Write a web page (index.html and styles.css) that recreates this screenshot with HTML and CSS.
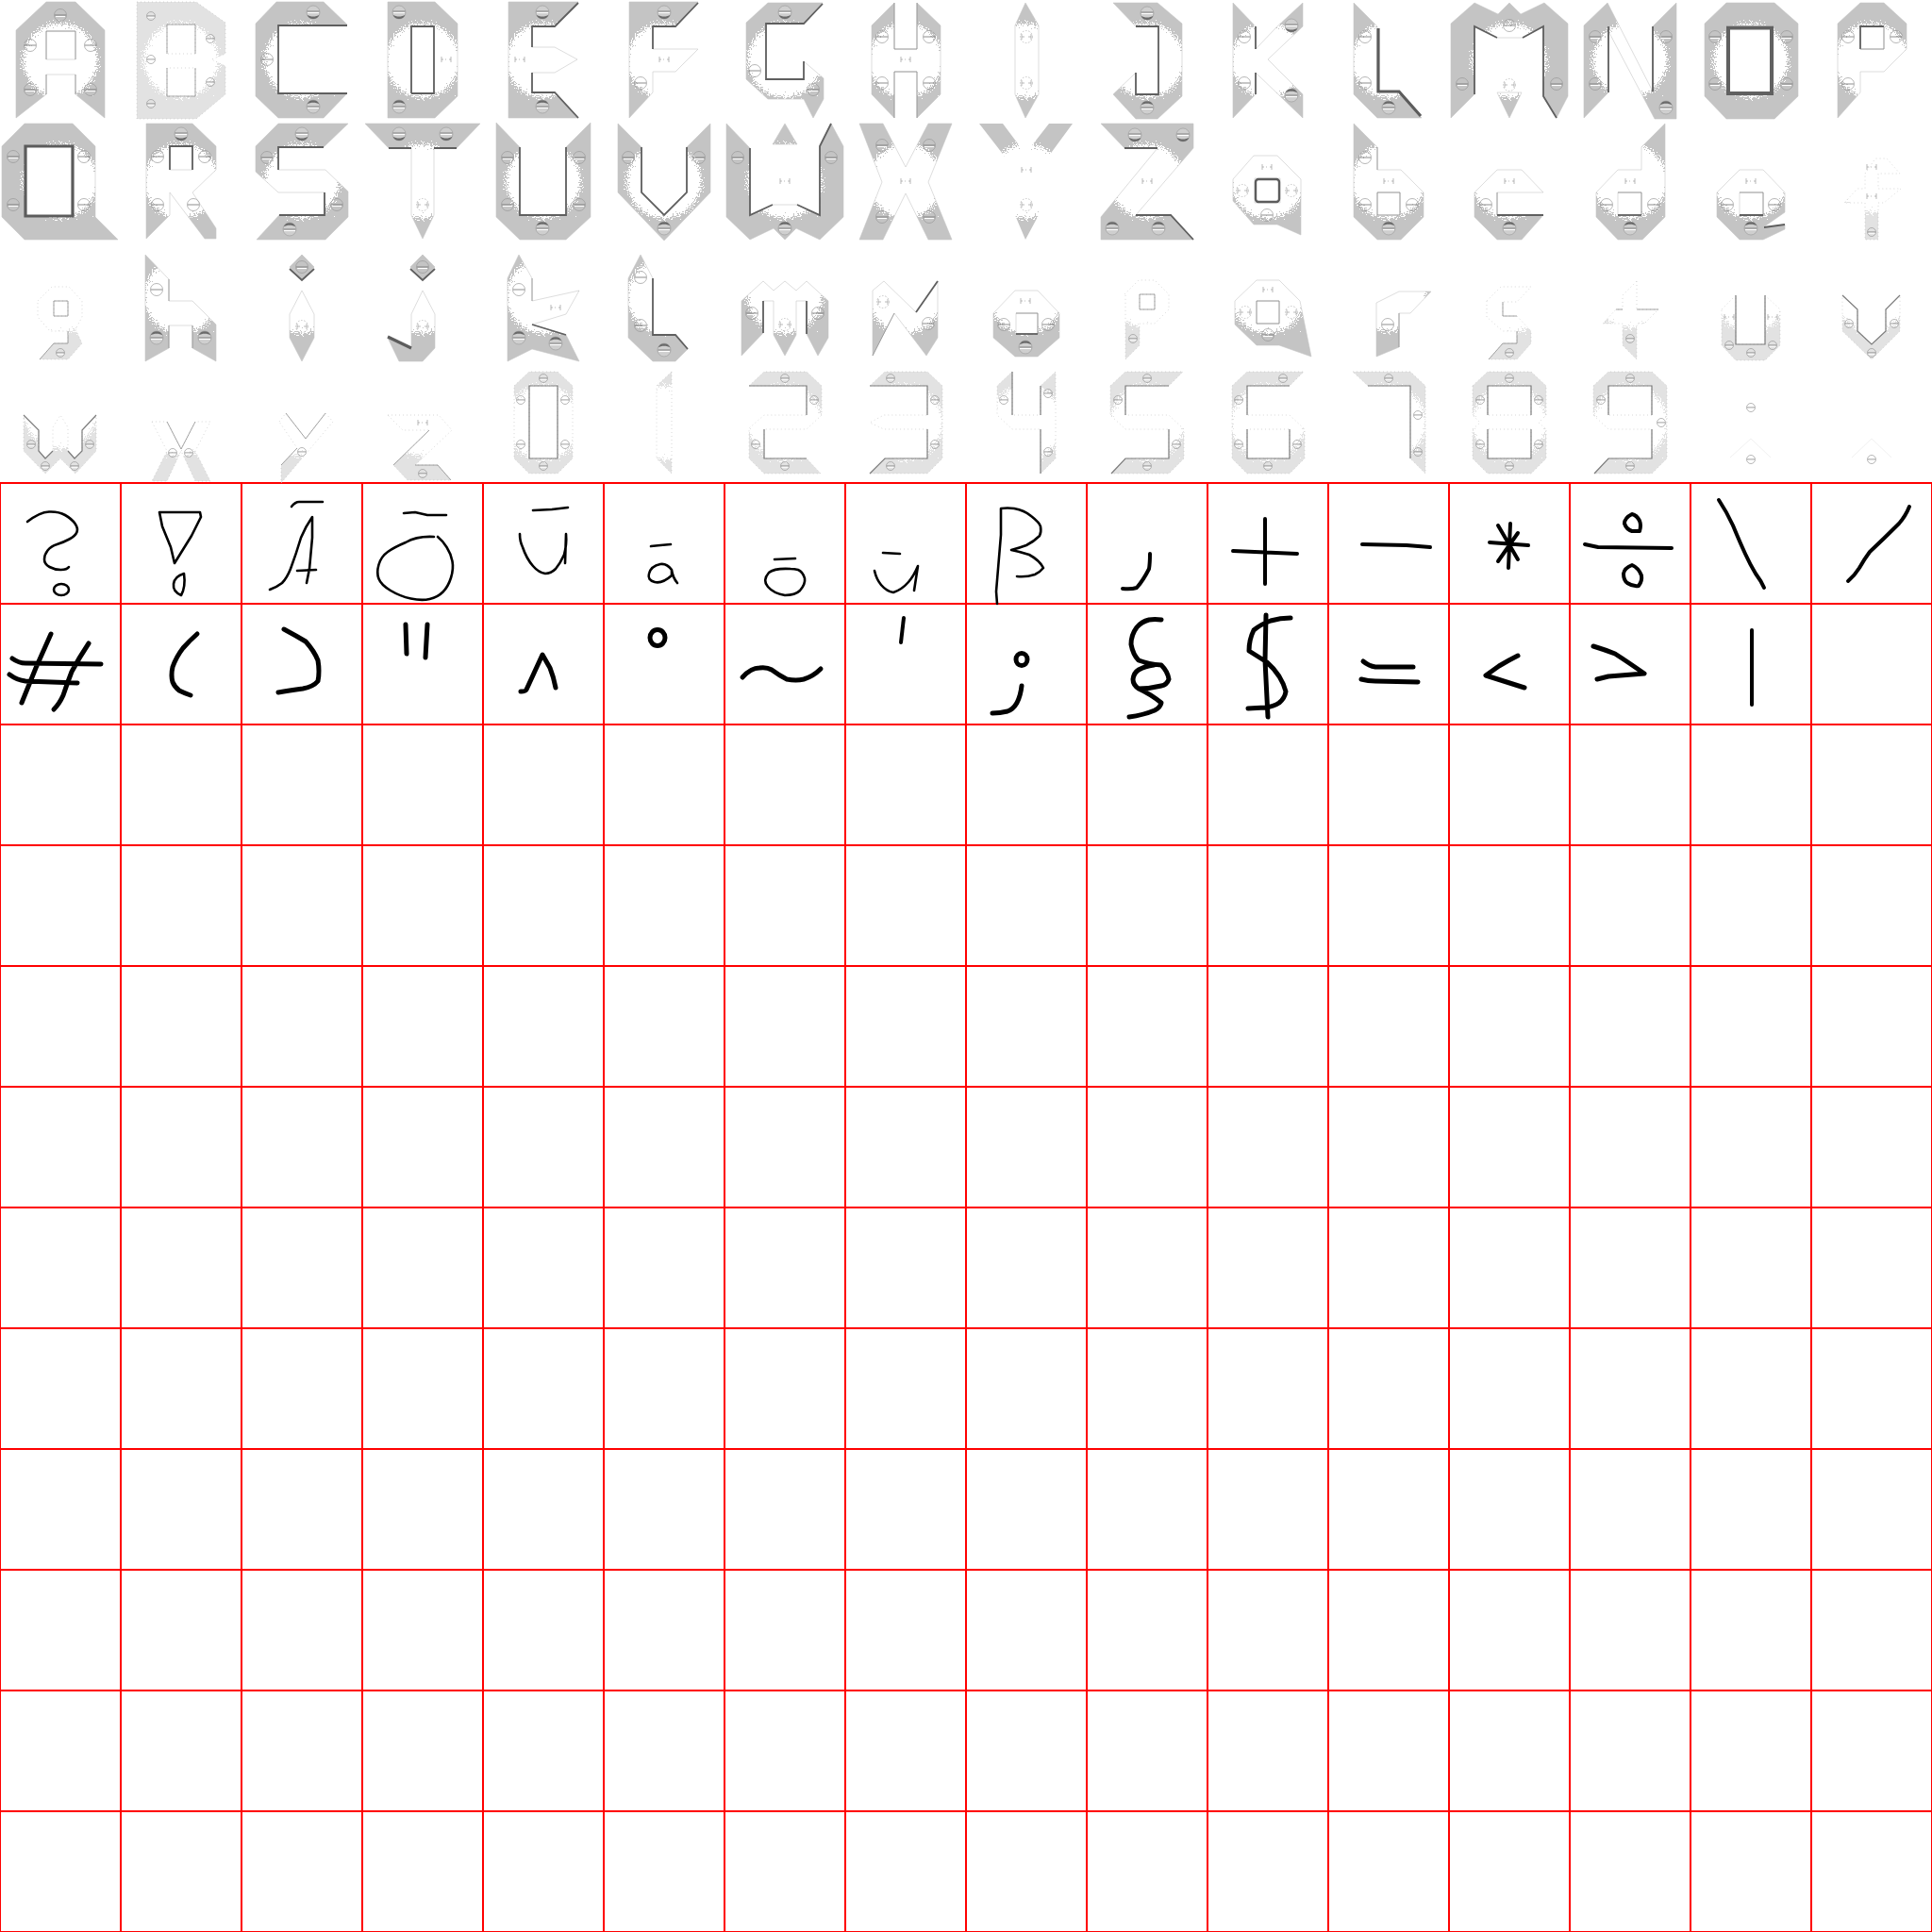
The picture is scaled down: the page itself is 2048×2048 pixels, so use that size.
FILE: index.html
```html
<!DOCTYPE html>
<html lang="en">
<head>
<meta charset="utf-8">
<title>Font sheet</title>
<link rel="stylesheet" href="styles.css">
</head>
<body>
<svg class="defs" aria-hidden="true">
  <defs>
    <radialGradient id="fade" cx="64" cy="64" r="45" gradientUnits="userSpaceOnUse">
      <stop offset="0.74" stop-color="#fff" stop-opacity="1"/>
      <stop offset="1" stop-color="#fff" stop-opacity="0"/>
    </radialGradient>
    <filter id="grain" x="0" y="0" width="1" height="1" color-interpolation-filters="sRGB">
      <feTurbulence type="fractalNoise" baseFrequency="0.75" numOctaves="2" seed="7" result="noise"/>
      <feColorMatrix in="noise" type="matrix" values="0 0 0 0 1  0 0 0 0 1  0 0 0 0 1  0 0 0 1.5 -0.25" result="spread"/>
      <feComposite in="SourceGraphic" in2="spread" operator="arithmetic" k1="0" k2="1" k3="1" k4="-0.5" result="mix"/>
      <feComponentTransfer in="mix" result="hard">
        <feFuncA type="discrete" tableValues="0 1"/>
      </feComponentTransfer>
      <feFlood flood-color="#fff"/>
      <feComposite in2="hard" operator="in"/>
    </filter>
    <circle id="spot" cx="64" cy="64" r="45" fill="url(#fade)" filter="url(#grain)"/>
    <g id="sb"><circle r="7" class="sc-face"/><path class="sc-shade" d="M-6.4-2.500A6.900 6.900 0 0 1 6.400-2.500C3-5-3-5-6.400-2.500Z"/><path class="sc-slot" d="M-6.500 0H6.500"/><path class="sc-glint" d="M-6 1.500H6"/></g>
    <g id="st"><circle r="7" class="sc-face"/><path class="sc-shade" d="M-6.400 2.800A6.900 6.900 0 0 0 6.400 2.800C3 5.200-3 5.200-6.400 2.800Z"/><path class="sc-slot" d="M-6.500-1H6.500"/><path class="sc-glint" d="M-6 .5H6"/></g>
    <g id="sm"><circle r="6.500" class="sc-ring"/><path class="sc-slot" d="M-6 0H6"/><path class="sc-glint" d="M-5 1.500H5"/></g>
    <g id="sl"><circle r="4.500" class="sc-ring"/><path class="sc-slot" d="M-4 0H4"/><path class="sc-glint" d="M-3.500 1.200H3.500"/></g>
    <g id="sd"><circle r="6.500" class="sc-dash"/><path class="sc-mark" d="M-5-3V3M5-3V3M-5 0H-2M2 0H5"/></g>
    <g id="sf"><path class="sc-mark" d="M-5-3V3M5-3V3M-5 0H-3M-1 0H0M3 0H5"/></g>
  </defs>
</svg>

<main class="sheet">
  <section class="plates">
    <!-- A -->
    <svg class="glyph grey"><path id="p-A" d="M17 32 49 2H80L111 32V125L80 100V79H49V100L17 125ZM49 33H80V63H49Z"/><use href="#spot"/><use class="rim" href="#p-A"/><path class="et" d="M49 33H80M49 33V63M80 33V63M49 79V100M80 79V100"/><use href="#sm" x="64" y="16"/><use href="#sm" x="32" y="48"/><use href="#sm" x="96" y="48"/><use href="#sm" x="32" y="95"/><use href="#sm" x="96" y="95"/></svg>
    <!-- B -->
    <svg class="glyph pale"><path id="p-B" d="M17 2H80L111 24V57L96 63 111 70V100L80 126H17ZM49 26V57H79V26ZM49 72V102H79V72Z"/><use href="#spot"/><use class="rim" href="#p-B"/><path class="et" d="M49 57V26H79V57M49 72V102H79V72"/><use href="#sl" x="32" y="17"/><use href="#sl" x="95" y="41"/><use href="#sl" x="32" y="63"/><use href="#sl" x="95" y="87"/><use href="#sl" x="32" y="110"/></svg>
    <!-- C -->
    <svg class="glyph grey"><path id="p-C" d="M15 25 37 2H87L112 26H39V99H112L87 125H39L15 102Z"/><use href="#spot"/><use class="rim" href="#p-C"/><path class="ed" d="M112 27H39V99H112"/><use href="#st" x="76" y="13"/><use href="#sm" x="27" y="63"/><use href="#sb" x="76" y="113"/></svg>
    <!-- D -->
    <svg class="glyph grey"><path id="p-D" d="M27 2H77L101 25V102L77 125H27ZM52 28V99H76V28Z"/><use href="#spot"/><use class="rim" href="#p-D"/><path class="ed" d="M52 99V28H76V99H52"/><use href="#st" x="39" y="13"/><use href="#sf" x="89" y="63"/><use href="#sb" x="39" y="113"/></svg>
    <!-- E -->
    <svg class="glyph grey"><path id="p-E" d="M27 2H101L76 28H52V50H76L100 63 76 77H52V98H76L101 125H27Z"/><use href="#spot"/><use class="rim" href="#p-E"/><path class="ed" d="M101 3 76 28H52V50M52 77V98H76L101 125"/><use href="#st" x="63" y="13"/><use href="#sf" x="39" y="63"/><use href="#sb" x="63" y="113"/></svg>
    <!-- F -->
    <svg class="glyph grey"><path id="p-F" d="M27 2H100L76 28H52V52H100L76 76H52V98L27 125Z"/><use href="#spot"/><use class="rim" href="#p-F"/><path class="ed" d="M100 3 76 28H52V52"/><use href="#st" x="64" y="13"/><use href="#sf" x="64" y="63"/><use href="#sm" x="39" y="88"/></svg>
    <!-- G -->
    <svg class="glyph grey"><path id="p-G" d="M23 24 46 3H104L84 25H44V84H84V65L105 83V105L94 125 84 105H46L23 84Z"/><use href="#spot"/><use class="rim" href="#p-G"/><path class="ed" d="M104 4 84 25H44V84H84V65"/><use href="#st" x="64" y="13"/><use href="#sm" x="32" y="75"/><use href="#sm" x="94" y="95"/></svg>
    <!-- H -->
    <svg class="glyph grey"><path id="p-H" d="M52 3V52H76V3L101 27V100L76 125V76H52V125L28 100V27Z"/><use href="#spot"/><use class="rim" href="#p-H"/><path class="et" d="M52 3V52H76V3M52 125V76H76V125"/><use href="#sm" x="39" y="39"/><use href="#sm" x="89" y="39"/><use href="#sf" x="64" y="63"/><use href="#sm" x="39" y="88"/><use href="#sm" x="89" y="88"/></svg>
    <!-- I -->
    <svg class="glyph grey"><path id="p-I" d="M63 3 77 27V100L63 125 52 100V27Z"/><use href="#spot"/><use class="rim" href="#p-I"/><use href="#sd" x="64" y="39"/><use href="#sd" x="64" y="88"/></svg>
    <!-- J -->
    <svg class="glyph grey"><path id="p-J" d="M28 3H75L101 25V102L75 126H52L28 100 52 77V100H76V28H52Z"/><use href="#spot"/><use class="rim" href="#p-J"/><path class="ed" d="M52 28H76V100H52V77"/><use href="#st" x="64" y="14"/><use href="#sb" x="64" y="114"/></svg>
    <!-- K -->
    <svg class="glyph grey"><path id="p-K" d="M27 3 51 28V52L74 28 101 3V28L64 63 101 100V125L51 77V100L27 125Z"/><use href="#spot"/><use class="rim" href="#p-K"/><path class="ed" d="M51 28V52M51 77V100"/><use href="#sm" x="39" y="39"/><use href="#sm" x="39" y="88"/><use href="#st" x="89" y="27"/><use href="#sb" x="89" y="101"/></svg>
    <!-- L -->
    <svg class="glyph grey"><path id="p-L" d="M27 3 52 28V98H75L99 125H52L27 100Z"/><use href="#spot"/><use class="rim" href="#p-L"/><path class="eh" d="M53 30V97H75L98 123"/><use href="#sm" x="39" y="39"/><use href="#sm" x="39" y="88"/><use href="#sb" x="64" y="114"/></svg>
    <!-- M -->
    <svg class="glyph grey"><path id="p-M" d="M2 25 27 3 52 15 64 3 76 15 101 3 126 25V102L114 125 100 102V28L78 40H51L27 28V100L2 125ZM51 98H77L64 125Z"/><use href="#spot"/><use class="rim" href="#p-M"/><path class="ed" d="M51 40 27 28V100M78 40 100 28V102L114 125"/><use href="#sm" x="64" y="27"/><use href="#sm" x="14" y="89"/><use href="#sm" x="114" y="89"/><use href="#sd" x="64" y="90"/></svg>
    <!-- N -->
    <svg class="glyph grey"><path id="p-N" d="M15 27 40 3 88 97V28L113 3V126H90L41 33V98L15 125Z"/><use href="#spot"/><use class="rim" href="#p-N"/><path class="ed" d="M41 28V98M88 28V97"/><use href="#sm" x="27" y="39"/><use href="#sm" x="27" y="89"/><use href="#sm" x="102" y="39"/><use href="#sb" x="102" y="114"/></svg>
    <!-- O -->
    <svg class="glyph grey"><path id="p-O" d="M15 25 38 3H89L114 25V102L89 126H38L15 102ZM38 27V101H88V27Z"/><use href="#spot"/><use class="rim" href="#p-O"/><path class="frame" d="M40 29.500H86V99H40Z"/><use href="#sm" x="26" y="39"/><use href="#sm" x="26" y="89"/><use href="#sm" x="102" y="39"/><use href="#sm" x="102" y="89"/></svg>
    <!-- P -->
    <svg class="glyph grey"><path id="p-P" d="M28 25 52 3H77L101 25V52L77 76H52V98L28 125ZM52 28V52H77V28Z"/><use href="#spot"/><use class="rim" href="#p-P"/><path class="ed" d="M52 52V28H77"/><path class="et" d="M52 52H77V28"/><use href="#sm" x="39" y="39"/><use href="#sm" x="39" y="89"/><use href="#sm" x="90" y="39"/></svg>

    <!-- Q -->
    <svg class="glyph grey"><path id="p-Q" d="M2 27 26 3H77L101 27V102L125 126H26L2 102ZM27 27V101H77V27Z"/><use href="#spot"/><use class="rim" href="#p-Q"/><path class="eh" d="M27 27H77V101H27Z"/><use href="#sm" x="14" y="38"/><use href="#sm" x="14" y="89"/><use href="#sm" x="89" y="38"/><use href="#sm" x="89" y="89"/></svg>
    <!-- R -->
    <svg class="glyph grey"><path id="p-R" d="M27 3H76L101 27V52L76 76 101 114V125H89L52 76V100L27 125ZM52 27V52H76V27Z"/><use href="#spot"/><use class="rim" href="#p-R"/><path class="ed" d="M52 52V27H76V52"/><use href="#st" x="64" y="14"/><use href="#sm" x="39" y="38"/><use href="#sm" x="89" y="38"/><use href="#sm" x="39" y="89"/><use href="#sm" x="77" y="89"/></svg>
    <!-- S -->
    <svg class="glyph grey"><path id="p-S" d="M15 27 39 3H113L87 28H39V52H89L113 75V102L89 126H16L40 100H88V76H39L15 54Z"/><use href="#spot"/><use class="rim" href="#p-S"/><path class="ed" d="M87 28H39V52M88 76V100H40"/><use href="#st" x="64" y="14"/><use href="#sm" x="27" y="39"/><use href="#sm" x="101" y="89"/><use href="#sb" x="51" y="115"/></svg>
    <!-- T -->
    <svg class="glyph grey"><path id="p-T" d="M3 3H125L100 29H76V100L64 125 52 100V29H28Z"/><use href="#spot"/><use class="rim" href="#p-T"/><path class="ed" d="M28 29H52M76 29H100"/><use href="#st" x="39" y="14"/><use href="#st" x="89" y="14"/><use href="#sd" x="64" y="89"/></svg>
    <!-- U -->
    <svg class="glyph grey"><path id="p-U" d="M14 2 39 28V100H88V28L114 2V102L88 126H39L14 102Z"/><use href="#spot"/><use class="rim" href="#p-U"/><path class="ed" d="M39 28V100H88V28"/><use href="#sm" x="26" y="39"/><use href="#sm" x="26" y="89"/><use href="#sm" x="102" y="39"/><use href="#sm" x="102" y="89"/><use href="#sb" x="63" y="114"/></svg>
    <!-- V -->
    <svg class="glyph grey"><path id="p-V" d="M15 3 40 28V76L64 100 88 76V28L113 3V76L64 127 15 76Z"/><use href="#spot"/><use class="rim" href="#p-V"/><path class="ed" d="M40 28V76L64 100 88 76V28"/><use href="#sm" x="26" y="39"/><use href="#sm" x="101" y="39"/><use href="#sb" x="64" y="114"/></svg>
    <!-- W -->
    <svg class="glyph grey"><path id="p-W" d="M2 3 27 29V100L51 89H77L101 100V27L113 3 126 27V102L101 126 76 114 64 126 52 114 27 126 2 102ZM64 3 77 25H51Z"/><use href="#spot"/><use class="rim" href="#p-W"/><path class="ed" d="M27 29V100L51 89M77 89 101 100V27L113 3"/><use href="#sm" x="14" y="39"/><use href="#sm" x="113" y="39"/><use href="#sb" x="64" y="114"/><use href="#sf" x="64" y="64"/></svg>
    <!-- X -->
    <svg class="glyph grey"><path id="p-X" d="M15 3H40L64 49 88 3H113L88 65 113 126H88L64 77 40 126H15L39 65Z"/><use href="#spot"/><use class="rim" href="#p-X"/><use href="#sm" x="39" y="26"/><use href="#sm" x="89" y="26"/><use href="#sm" x="39" y="102"/><use href="#sm" x="89" y="102"/><use href="#sf" x="64" y="64"/></svg>
    <!-- Y -->
    <svg class="glyph grey"><path id="p-Y" d="M14 3H39L63 35 88 3H113L77 52V100L63 126 52 100V52Z"/><use href="#spot"/><use href="#sf" x="64" y="52"/><use href="#sd" x="64" y="89"/></svg>
    <!-- Z -->
    <svg class="glyph grey"><path id="p-Z" d="M15 3H113V29L52 100H89L113 126H15V102L75 29H40Z"/><use href="#spot"/><use class="rim" href="#p-Z"/><path class="ed" d="M40 29H75M52 100H89L113 126"/><use href="#st" x="51" y="15"/><use href="#st" x="102" y="15"/><use href="#sb" x="27" y="114"/><use href="#sb" x="76" y="114"/><use href="#sf" x="64" y="64"/></svg>
    <!-- a -->
    <svg class="glyph grey"><path id="p-a" d="M27 62 49 37H74L99 62V121L74 110H49L27 85ZM50 61V87H77V61Z"/><use href="#spot"/><use class="rim" href="#p-a"/><rect class="hole" x="51" y="62" width="25" height="24" rx="3"/><use href="#sd" x="37" y="74"/><use href="#sd" x="89" y="74"/><use href="#sm" x="63" y="100"/><use href="#sf" x="63" y="49"/></svg>
    <!-- b -->
    <svg class="glyph grey"><path id="p-b" d="M27 3 52 28V52H77L101 76V102L77 126H52L27 102ZM52 76V100H76V76Z"/><use href="#spot"/><use class="rim" href="#p-b"/><path class="et" d="M52 28V52M52 76H76V100H52Z"/><use href="#sm" x="39" y="39"/><use href="#sm" x="39" y="89"/><use href="#sm" x="89" y="89"/><use href="#sb" x="64" y="114"/><use href="#sf" x="64" y="64"/></svg>
    <!-- c -->
    <svg class="glyph grey"><path id="p-c" d="M27 76 51 52H77L100 76H51V100H100L77 126H51L27 102Z"/><use href="#spot"/><use class="rim" href="#p-c"/><path class="et" d="M51 76V100"/><path class="ed" d="M51 100H100"/><use href="#sm" x="39" y="89"/><use href="#sb" x="64" y="114"/><use href="#sf" x="64" y="64"/></svg>
    <!-- d -->
    <svg class="glyph grey"><path id="p-d" d="M101 3V102L77 126H51L28 102V76L51 52H76V28ZM51 76V100H76V76Z"/><use href="#spot"/><use class="rim" href="#p-d"/><path class="et" d="M51 76H76V100"/><path class="ed" d="M51 100H76"/><use href="#sm" x="39" y="89"/><use href="#sm" x="89" y="89"/><use href="#sb" x="64" y="114"/><use href="#sf" x="64" y="64"/></svg>
    <!-- e -->
    <svg class="glyph grey"><path id="p-e" d="M28 76 52 52H77L100 76V97L77 113 100 110V115L77 126H52L28 102ZM52 76V100H77V76Z"/><use href="#spot"/><use class="rim" href="#p-e"/><path class="et" d="M52 76H77V100"/><path class="ed" d="M52 100H77M78 113 100 110"/><use href="#sm" x="39" y="89"/><use href="#sm" x="89" y="89"/><use href="#sb" x="64" y="114"/><use href="#sf" x="64" y="64"/></svg>
    <!-- f -->
    <svg class="glyph pale"><path id="p-f" d="M57 56 68 40H80L94 56H71V72H95L77 87H71V126H57V87H35L49 72H57Z"/><use href="#spot" y="-6"/><use class="rim" href="#p-f"/><use href="#sl" x="64" y="118"/><use href="#sf" x="64" y="49"/><use href="#sf" x="64" y="80"/></svg>

    <!-- g -->
    <svg class="glyph pale"><path id="p-g" d="M40 63 55 48H73L87 63V80L80 93 87 108 72 125H42L57 108H72V95H53L40 80ZM57 63V79H72V63Z"/><use href="#spot" y="-6"/><use class="rim" href="#p-g"/><path class="et" d="M57 63H72V79H57ZM72 95V108H57L42 125"/><use href="#sl" x="64" y="118"/></svg>
    <!-- h -->
    <svg class="glyph grey"><path id="p-h" d="M26 14 51 40V63H76L101 88V127L76 113V89H51V113L26 127Z"/><use href="#spot" y="-6"/><use class="rim" href="#p-h"/><path class="et" d="M51 40V63M51 89V113M76 89V113"/><use href="#sm" x="38" y="51"/><use href="#sb" x="38" y="102"/><use href="#sb" x="89" y="102"/></svg>
    <!-- i -->
    <svg class="glyph grey"><path id="p-i" d="M64 14 77 27 64 40 51 27ZM64 52 77 77V102L64 127 51 102V77Z"/><use href="#spot" y="-6"/><use class="rim" href="#p-i"/><path class="fresh" d="M64 14 77 27 64 40 51 27Z"/><path class="ed" d="M51 29 64 41 77 29"/><use href="#sm" x="64" y="27"/><use href="#sd" x="64" y="90"/></svg>
    <!-- j -->
    <svg class="glyph grey"><path id="p-j" d="M64 14 77 27 64 40 51 27ZM64 52 77 77V113L64 127H39L27 102 52 113V77Z"/><use href="#spot" y="-6"/><use class="rim" href="#p-j"/><path class="fresh" d="M64 14 77 27 64 40 51 27Z"/><path class="ed" d="M51 29 64 41 77 29"/><path class="eh" d="M27 101 52 113"/><use href="#sm" x="64" y="27"/><use href="#sd" x="64" y="90"/></svg>
    <!-- k -->
    <svg class="glyph grey"><path id="p-k" d="M38 14 52 39V63L102 52 88 77 52 88 88 99 102 127 52 114 26 127V39Z"/><use href="#spot" y="-6"/><use class="rim" href="#p-k"/><path class="et" d="M52 39V63"/><path class="ed" d="M52 88 88 99"/><use href="#sm" x="38" y="51"/><use href="#sb" x="38" y="102"/><use href="#sb" x="77" y="108"/><use href="#sf" x="77" y="70"/></svg>
    <!-- l -->
    <svg class="glyph grey"><path id="p-l" d="M39 14 52 39V99H76L89 114 76 127H52L26 102V39Z"/><use href="#spot" y="-6"/><use class="rim" href="#p-l"/><path class="ed" d="M52 39V99H76L89 114"/><use href="#sm" x="39" y="38"/><use href="#sm" x="39" y="89"/><use href="#sb" x="64" y="115"/></svg>
    <!-- m -->
    <svg class="glyph grey"><path id="p-m" d="M18 63 41 42 52 52 64 42 76 52 87 42 110 63V102L99 121 87 98V63H76V99L64 121 52 99V63H41V97L18 121Z"/><use href="#spot" y="-6"/><use class="rim" href="#p-m"/><path class="ed" d="M41 63V97M87 63V98"/><use href="#sm" x="29" y="76"/><use href="#sm" x="99" y="76"/><use href="#sd" x="64" y="88"/></svg>
    <!-- n -->
    <svg class="glyph grey"><path id="p-n" d="M29 52 41 42 75 75 98 42V102L86 121 52 76 29 121Z"/><use href="#spot" y="-6"/><use class="rim" href="#p-n"/><path class="ed" d="M75 75 98 42"/><path class="et" d="M52 76 29 121"/><use href="#sd" x="40" y="64"/><use href="#sm" x="88" y="87"/></svg>
    <!-- o -->
    <svg class="glyph grey"><path id="p-o" d="M29 76 52 52H76L99 76V102L76 122H52L29 102ZM53 76V98H76V76Z"/><use href="#spot" y="-6"/><use class="rim" href="#p-o"/><path class="et" d="M53 76H76V98"/><path class="ed" d="M53 98H76"/><use href="#sm" x="40" y="88"/><use href="#sm" x="87" y="88"/><use href="#sb" x="63" y="112"/><use href="#sf" x="63" y="63"/></svg>
    <!-- p -->
    <svg class="glyph pale"><path id="p-p" d="M40 56 55 41H72L87 56V72L72 87H56V110L41 125V56ZM56 56V72H72V56Z"/><use href="#spot" y="-12"/><use class="rim" href="#p-p"/><path class="et" d="M56 56H72V72H56Z"/><use href="#sl" x="49" y="103"/></svg>
    <!-- q -->
    <svg class="glyph grey"><path id="p-q" d="M29 63 52 41H76L98 63 110 122 76 110H52L29 88ZM52 63V87H76V63Z"/><use href="#spot" y="-6"/><use class="rim" href="#p-q"/><path class="et" d="M52 63H76V87H52Z"/><use href="#sd" x="40" y="75"/><use href="#sd" x="89" y="75"/><use href="#sm" x="64" y="99"/><use href="#sf" x="64" y="51"/></svg>
    <!-- r -->
    <svg class="glyph grey"><path id="p-r" d="M51 65 75 53H109L87 76H75V112L51 122Z"/><use href="#spot" y="-8"/><use class="rim" href="#p-r"/><path class="et" d="M75 76V112"/><use href="#sm" x="63" y="88"/></svg>
    <!-- s -->
    <svg class="glyph pale"><path id="p-s" d="M40 63 55 48H87L72 64H57V79H72L87 95V108L72 125H42L57 108H72V95H57L40 80Z"/><use href="#spot" y="-6"/><use class="rim" href="#p-s"/><path class="et" d="M57 64V79H72M72 95V108H57L42 125"/><use href="#sl" x="64" y="118"/></svg>
    <!-- t -->
    <svg class="glyph pale"><path id="p-t" d="M71 42V72H94L79 87H71V125L56 110V87H35L49 72H56V57Z"/><use href="#spot" y="-12"/><use class="rim" href="#p-t"/><path class="et" d="M49 72H56M71 72H94"/><use href="#sl" x="64" y="103"/></svg>
    <!-- u -->
    <svg class="glyph pale"><path id="p-u" d="M33 72 48 57V109H79V57L95 72V110L79 126H48L33 110Z"/><use href="#spot" y="-8"/><use class="rim" href="#p-u"/><path class="ed thin" d="M48 57V109H79V57"/><use href="#sl" x="41" y="110"/><use href="#sl" x="87" y="110"/><use href="#sl" x="64" y="118"/><use href="#sf" x="41" y="80"/><use href="#sf" x="87" y="80"/></svg>
    <!-- v -->
    <svg class="glyph pale"><path id="p-v" d="M33 57 49 72V95L64 109 79 95V72L94 57V95L64 125 33 95Z"/><use href="#spot" y="-8"/><use class="rim" href="#p-v"/><path class="ed thin" d="M33 57 49 72V95L64 109 79 95V72L94 57"/><use href="#sl" x="40" y="87"/><use href="#sl" x="88" y="87"/><use href="#sl" x="64" y="118"/></svg>

    <!-- w -->
    <svg class="glyph pale"><path id="p-w" d="M25 56 41 72V94L48 102 56 94V69L64 56 72 69V94L79 102 87 94V72L102 56V94L80 118 64 102 48 118 25 94Z"/><use href="#spot" y="-12"/><use class="rim" href="#p-w"/><path class="ed thin" d="M25 56 41 72V94L48 102 56 94M72 94 79 102 87 94V72L102 56"/><use href="#sl" x="33" y="87"/><use href="#sl" x="95" y="87"/><use href="#sl" x="48" y="110"/><use href="#sl" x="79" y="110"/></svg>
    <!-- x -->
    <svg class="glyph pale"><path id="p-x" d="M33 63H49L64 92 79 63H95L79 94 95 126H79L64 94 49 126H33L49 94Z"/><use href="#spot" y="-4"/><use class="rim" href="#p-x"/><path class="et" d="M49 63 64 92 79 63"/><use href="#sl" x="55" y="96"/><use href="#sl" x="72" y="96"/></svg>
    <!-- y -->
    <svg class="glyph pale"><path id="p-y" d="M40 63 47 54 68 81 89 54 97 63 42 128V109L59 91Z"/><use href="#spot" y="-4"/><use class="rim" href="#p-y"/><path class="et" d="M47 54 68 81 89 54M59 91 42 109"/><use href="#sl" x="64" y="95"/></svg>
    <!-- z -->
    <svg class="glyph pale"><path id="p-z" d="M27 56H81L95 72 56 109H80L94 125H48L33 109 71 72H43Z"/><use href="#spot" y="-4"/><use class="rim" href="#p-z"/><path class="et" d="M71 72 33 109M56 109H80L94 125"/><use href="#sl" x="64" y="118"/><use href="#sf" x="64" y="64"/></svg>
    <!-- 0 -->
    <svg class="glyph pale"><path id="p-0" d="M33 25 49 10H79L95 25V102L79 118H49L33 102ZM49 25V102H79V25Z"/><use href="#spot"/><use class="rim" href="#p-0"/><path class="ed thin" d="M49 25H79V102H49Z"/><use href="#sl" x="64" y="17"/><use href="#sl" x="40" y="40"/><use href="#sl" x="87" y="40"/><use href="#sl" x="40" y="87"/><use href="#sl" x="87" y="87"/><use href="#sl" x="64" y="110"/></svg>
    <!-- 1 -->
    <svg class="glyph pale"><path id="p-1" d="M72 10V118L56 102V25Z"/><use href="#spot"/><use class="rim" href="#p-1"/></svg>
    <!-- 2 -->
    <svg class="glyph pale"><path id="p-2" d="M26 25 42 10H87L103 25V56L87 71H42V102H87L102 118H42L26 102V70L42 56H87V25Z"/><use href="#spot"/><use class="rim" href="#p-2"/><path class="ed thin" d="M26 25H87V56M42 71V102H87"/><use href="#sl" x="64" y="17"/><use href="#sl" x="95" y="40"/><use href="#sl" x="33" y="87"/><use href="#sl" x="64" y="110"/></svg>
    <!-- 3 -->
    <svg class="glyph pale"><path id="p-3" d="M26 25 42 10H87L103 25V102L87 118H26L42 102H87V71H41L26 64 41 56H87V25Z"/><use href="#spot"/><use class="rim" href="#p-3"/><path class="ed thin" d="M26 25H87V56M87 71V102H42L26 118"/><use href="#sl" x="48" y="17"/><use href="#sl" x="95" y="40"/><use href="#sl" x="95" y="87"/><use href="#sl" x="48" y="110"/></svg>
    <!-- 4 -->
    <svg class="glyph pale"><path id="p-4" d="M49 10V56H79V25L95 10V102L79 118V71H49L33 56V25Z"/><use href="#spot"/><use class="rim" href="#p-4"/><path class="ed thin" d="M49 10V56M79 25V56M79 71V118"/><use href="#sl" x="40" y="40"/><use href="#sl" x="87" y="33"/><use href="#sl" x="87" y="95"/></svg>
    <!-- 5 -->
    <svg class="glyph pale"><path id="p-5" d="M25 25 41 10H102L87 25H41V56H87L103 71V102L87 118H26L41 102H87V71H41L25 56Z"/><use href="#spot"/><use class="rim" href="#p-5"/><path class="ed thin" d="M87 25H41V56M87 71V102H41L26 118"/><use href="#sl" x="64" y="17"/><use href="#sl" x="33" y="40"/><use href="#sl" x="95" y="87"/><use href="#sl" x="64" y="110"/></svg>
    <!-- 6 -->
    <svg class="glyph pale"><path id="p-6" d="M26 25 42 10H102L87 25H42V56H87L103 71V102L87 118H42L26 102ZM42 71V102H87V71Z"/><use href="#spot"/><use class="rim" href="#p-6"/><path class="ed thin" d="M87 25H42V56M42 71V102H87V71"/><use href="#sl" x="80" y="17"/><use href="#sl" x="33" y="40"/><use href="#sl" x="33" y="87"/><use href="#sl" x="95" y="87"/><use href="#sl" x="64" y="110"/></svg>
    <!-- 7 -->
    <svg class="glyph pale"><path id="p-7" d="M26 10H87L103 25V118L87 102V25H42Z"/><use href="#spot"/><use class="rim" href="#p-7"/><path class="ed thin" d="M42 25H87V102"/><use href="#sl" x="64" y="17"/><use href="#sl" x="95" y="56"/><use href="#sl" x="95" y="95"/></svg>
    <!-- 8 -->
    <svg class="glyph pale"><path id="p-8" d="M25 25 41 10H87L103 25V56L95 64 103 71V102L87 118H41L25 102V71L33 64 25 56ZM41 25V56H87V25ZM41 71V102H87V71Z"/><use href="#spot"/><use class="rim" href="#p-8"/><path class="ed thin" d="M41 56V25H87V56M41 71V102H87V71"/><use href="#sl" x="64" y="17"/><use href="#sl" x="33" y="40"/><use href="#sl" x="95" y="40"/><use href="#sl" x="33" y="87"/><use href="#sl" x="95" y="87"/><use href="#sl" x="64" y="110"/></svg>
    <!-- 9 -->
    <svg class="glyph pale"><path id="p-9" d="M25 25 41 10H87L103 25V102L87 118H26L41 102H87V71H41L25 56ZM41 25V56H87V25Z"/><use href="#spot"/><use class="rim" href="#p-9"/><path class="ed thin" d="M41 56V25H87V56M87 71V102H41L26 118"/><use href="#sl" x="64" y="17"/><use href="#sl" x="33" y="40"/><use href="#sl" x="97" y="64"/><use href="#sl" x="64" y="110"/></svg>
    <!-- small dotted mark -->
    <svg class="glyph"><path class="faint" d="M42 101 64 81 85 101"/><use href="#sl" x="64" y="48"/><use href="#sl" x="64" y="103"/></svg>
    <svg class="glyph"><path class="faint" d="M43 101 64 81 85 101"/><use href="#sl" x="64" y="103"/></svg>
  </section>

  <section class="ruled">
    <!-- ? -->
    <svg class="glyph"><path class="ink fine" d="M29 41Q42 31 52 30.500Q62 30 69 34Q76 38 79.500 43Q83 48 81.500 52Q80 56 73.500 59.500Q67 63 60.500 65Q54 67 50.500 71.500Q47 76 47 81Q47 86 52.500 89Q58 92 64.500 92Q71 92 73 89"/><ellipse class="ink fine" cx="65" cy="113" rx="8" ry="6"/></svg>
    <!-- ! -->
    <svg class="glyph"><path class="ink fine" d="M41 31H84L85 36 75 56 57 85 53 68 44 46ZM67 96Q57 99 56 107Q55 115 64 119Q69 110 67 96Z"/></svg>
    <!-- A macron -->
    <svg class="glyph"><path class="ink fine" d="M53 25Q57 20 61 20L86 20M30 113Q38 110 43 106Q48 101 52 91Q58 75 63 58Q68 46 75 36L75 58 72 91 69 106M59 93 79 92"/></svg>
    <!-- O macron -->
    <svg class="glyph"><path class="ink fine" d="M44 32 56 31 69 34 89 34M76 57Q58 56 46 63Q34 68 27 73Q20 78 17.500 86.500Q15 95 17.500 101.500Q20 108 30 114Q40 120 51.500 122.500Q63 125 71.500 123Q80 121 85.500 115.500Q91 110 94 100.500Q97 91 95.500 83Q94 75 89.500 68Q85 61 80 57"/></svg>
    <!-- U macron -->
    <svg class="glyph"><path class="ink fine" d="M53 29 73 28 90 26M39 54Q39 62 42 68Q46 80 53 88Q59 95 66 96Q72 96 77 91Q82 85 86 76Q89 65 88 54L87 85"/></svg>
    <!-- a macron -->
    <svg class="glyph"><path class="ink fine" d="M50 67 60 66 71 65M72 92Q67 85 60 86Q50 88 48 96Q46 103 54 105Q62 107 72 98L72 92Q73 100 78 106"/></svg>
    <!-- o macron -->
    <svg class="glyph"><path class="ink fine" d="M53 81 75 80M70 91Q53 90 47 95Q40 103 46 110Q52 117 64 119Q75 119 80 114Q86 107 85 101Q83 94 78 92Q74 91 70 91"/></svg>
    <!-- u macron -->
    <svg class="glyph"><path class="ink fine" d="M40 74 58 75M31 93Q33 102 38 108Q44 115 51 116Q60 113 67 105Q73 98 77 88L73 114"/></svg>
    <!-- sharp s -->
    <svg class="glyph"><path class="ink fine" d="M33 128 32 115 37 55 37 27Q44 26 51 27Q62 29 69 35Q78 42 79 46Q80 52 78 56Q72 62 64 66Q56 69 48 71Q58 73 67 76Q78 82 82 90Q78 95 73 97Q64 100 54 99"/></svg>
    <!-- , -->
    <svg class="glyph"><path class="ink mid" d="M67 75Q67 85 66 91Q60 103 53 111Q47 113 38 112"/></svg>
    <!-- + -->
    <svg class="glyph"><path class="ink mid" d="M61 38V107M27 72 50 73 95 75"/></svg>
    <!-- - -->
    <svg class="glyph"><path class="ink mid" d="M36 65 83 66 108 68"/></svg>
    <!-- * -->
    <svg class="glyph"><path class="ink mid" d="M65 43 63 90M52 45 73 81M73 53 52 83M43 63 84 66"/></svg>
    <!-- division -->
    <svg class="glyph"><path class="ink mid" d="M16 65 30 68 108 69M66 33Q58 37 58 43Q60 49 66 51L74 51Q76 45 74 40Q71 34 66 33ZM66 87Q58 90 57 96Q57 103 61 106Q67 110 73 109Q77 104 76 98Q73 90 66 87Z"/></svg>
    <!-- backslash -->
    <svg class="glyph"><path class="ink mid" d="M30 18Q38 30 45 45Q52 62 58 75Q63 86 69 96Q75 104 78 111"/></svg>
    <!-- slash -->
    <svg class="glyph"><path class="ink mid" d="M104 25Q100 35 93 43Q77 59 62 73Q56 81 51 90Q46 98 39 104"/></svg>

    <!-- # -->
    <svg class="glyph"><path class="ink bold" d="M54 32 38 68 23 105M94 42Q84 57 76 72Q71 85 67 97Q63 106 57 112M13 58Q20 63 27 63L107 64M10 75Q18 81 27 82L82 84"/></svg>
    <!-- ( -->
    <svg class="glyph"><path class="ink bold" d="M81 32Q72 40 66 47Q59 56 55 67Q53 76 55 83Q57 88 62 92Q68 95 74 97"/></svg>
    <!-- ) -->
    <svg class="glyph"><path class="ink bold" d="M45 27Q58 34 68 40Q77 50 81 60Q83 72 81 82Q76 88 65 90Q50 92 39 94"/></svg>
    <!-- " -->
    <svg class="glyph"><path class="ink bold" d="M46 22 47 53M69 22 67 57"/></svg>
    <!-- ^ -->
    <svg class="glyph"><path class="ink bold" d="M40 93Q45 93 46 91L63 54 71 68Q75 78 77 89"/></svg>
    <!-- degree -->
    <svg class="glyph"><ellipse class="ink bold" cx="57" cy="36" rx="8" ry="8.500"/></svg>
    <!-- ~ -->
    <svg class="glyph"><path class="ink bold" d="M19 78Q28 68 37 68Q45 67 50 70Q58 76 66 80Q76 82 84 80Q94 77 102 69"/></svg>
    <!-- ' -->
    <svg class="glyph"><path class="ink mid" d="M62 15 59 41"/></svg>
    <!-- ; -->
    <svg class="glyph"><ellipse class="ink bold" cx="59" cy="59" rx="6" ry="6.500"/><path class="ink bold" d="M59 87Q58 97 54 105Q50 112 44 114Q36 116 28 116"/></svg>
    <!-- section -->
    <svg class="glyph"><path class="ink bold" d="M79 17Q72 16 66 17Q58 19 53 25Q47 33 47 43Q49 54 55 60Q66 64 79 65Q86 72 87 80Q85 86 79 87Q67 90 55 90Q49 86 49 80Q50 73 55 70Q62 66 71 65M55 90Q68 96 79 105Q78 110 72 113Q60 118 45 120"/></svg>
    <!-- $ -->
    <svg class="glyph"><path class="ink bold" d="M88 15Q77 15 67 18Q56 22 49 28Q44 38 44 50Q52 55 63 62Q70 68 76 77Q81 85 83 93Q82 100 76 105Q70 109 61 110L43 111M62 12 61 60 64 120"/></svg>
    <!-- = -->
    <svg class="glyph"><path class="ink bold" d="M37 61Q43 66 50 67L90 67M35 80Q42 82 50 82L95 83"/></svg>
    <!-- < -->
    <svg class="glyph"><path class="ink bold" d="M73 55Q63 60 53 66L39 76 80 89"/></svg>
    <!-- > -->
    <svg class="glyph"><path class="ink bold" d="M25 45Q38 49 48 53Q62 62 79 74L41 77 29 80"/></svg>
    <!-- | -->
    <svg class="glyph"><path class="ink mid" d="M65 28V107"/></svg>
  </section>
</main>
</body>
</html>
```
FILE: styles.css
```css
html, body {
  margin: 0;
  background: #fff;
}

.defs {
  display: block;
  width: 0;
  height: 0;
}

.sheet {
  width: 2048px;
  height: 2048px;
  overflow: hidden;
}

.plates {
  display: grid;
  grid-template-columns: repeat(16, 128px);
  grid-auto-rows: 128px;
  height: 511px;
}

.ruled {
  display: grid;
  grid-template-columns: repeat(16, 128px);
  grid-auto-rows: 128px;
  padding-top: 1px;
  height: 1536px;
  background-color: #fff;
  background-image:
    linear-gradient(90deg, #f00 2px, transparent 2px),
    linear-gradient(180deg, #f00 2px, transparent 2px);
  background-size: 128px 128px;
  background-position: -1px 0;
}

.glyph {
  display: block;
  width: 128px;
  height: 128px;
  overflow: visible;
  fill-rule: evenodd;
}

.grey { fill: #c4c4c4; }
.pale { fill: #e2e2e2; }

.rim {
  fill: none;
  stroke: #c6c6c6;
  stroke-width: 0.6;
}

.pale .rim {
  stroke: #bcbcbc;
  stroke-dasharray: 1 3;
}

.fresh { fill: #c4c4c4; }

.ed, .eh, .et, .frame {
  fill: none;
  stroke-linejoin: miter;
}
.ed { stroke: #5f5f5f; stroke-width: 1.8; }
.ed.thin { stroke: #7c7c7c; stroke-width: 1.2; }
.eh { stroke: #5c5c5c; stroke-width: 3.2; }
.et { stroke: #8e8e8e; stroke-width: 0.8; }
.frame { stroke: #616161; stroke-width: 4; }
.hole { fill: #fff; stroke: #5c5c5c; stroke-width: 2.4; }
.faint { fill: none; stroke: #ececec; stroke-width: 0.8; }

.sc-face { fill: #cfcfcf; stroke: #989898; stroke-width: 0.6; }
.sc-ring { fill: none; stroke: #989898; stroke-width: 0.7; }
.sc-dash { fill: none; stroke: #b0b0b0; stroke-width: 0.7; stroke-dasharray: 1.6 1.6; }
.sc-shade { fill: #6a6a6a; stroke: none; }
.sc-slot { fill: none; stroke: #6f6f6f; stroke-width: 0.8; }
.sc-glint { fill: none; stroke: #fff; stroke-width: 1.1; }
.sc-mark { fill: none; stroke: #9c9c9c; stroke-width: 0.7; }

.ink {
  fill: none;
  stroke: #000;
  stroke-linecap: round;
  stroke-linejoin: round;
}
.fine { stroke-width: 2.6; }
.mid { stroke-width: 4; }
.bold { stroke-width: 5; }
```
